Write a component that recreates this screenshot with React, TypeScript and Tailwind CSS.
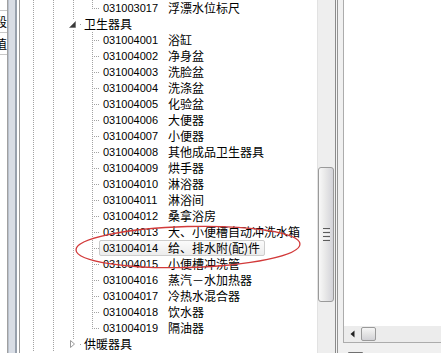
import React from "react";

const CJK = '"Noto Sans CJK SC", "Noto Sans CJK JP", sans-serif';
const LAT = '"Liberation Sans", Arial, sans-serif';

type Row =
  | { kind: "leaf"; code: string; name: string; last?: boolean; selected?: boolean }
  | { kind: "cat"; name: string; open: boolean };

const rows: Row[] = [
  { kind: "leaf", code: "031003017", name: "浮漂水位标尺", last: true },
  { kind: "cat", name: "卫生器具", open: true },
  { kind: "leaf", code: "031004001", name: "浴缸" },
  { kind: "leaf", code: "031004002", name: "净身盆" },
  { kind: "leaf", code: "031004003", name: "洗脸盆" },
  { kind: "leaf", code: "031004004", name: "洗涤盆" },
  { kind: "leaf", code: "031004005", name: "化验盆" },
  { kind: "leaf", code: "031004006", name: "大便器" },
  { kind: "leaf", code: "031004007", name: "小便器" },
  { kind: "leaf", code: "031004008", name: "其他成品卫生器具" },
  { kind: "leaf", code: "031004009", name: "烘手器" },
  { kind: "leaf", code: "031004010", name: "淋浴器" },
  { kind: "leaf", code: "031004011", name: "淋浴间" },
  { kind: "leaf", code: "031004012", name: "桑拿浴房" },
  { kind: "leaf", code: "031004013", name: "大、小便槽自动冲洗水箱" },
  { kind: "leaf", code: "031004014", name: "给、排水附(配)件", selected: true },
  { kind: "leaf", code: "031004015", name: "小便槽冲洗管" },
  { kind: "leaf", code: "031004016", name: "蒸汽－水加热器" },
  { kind: "leaf", code: "031004017", name: "冷热水混合器" },
  { kind: "leaf", code: "031004018", name: "饮水器" },
  { kind: "leaf", code: "031004019", name: "隔油器", last: true },
  { kind: "cat", name: "供暖器具", open: false },
];

const G = "#a3a3a3";

function VLine({ x, y1, y2 }: { x: number; y1: number; y2: number }) {
  return (
    <line
      x1={x + 0.5}
      x2={x + 0.5}
      y1={y1}
      y2={y2}
      stroke={G}
      strokeWidth={1}
      strokeDasharray="1 1"
      shapeRendering="crispEdges"
    />
  );
}

function LeafGuides({ last }: { last?: boolean }) {
  return (
    <svg width={79} height={16} className="shrink-0 block">
      <VLine x={13} y1={0} y2={16} />
      <VLine x={33} y1={0} y2={16} />
      <VLine x={53} y1={0} y2={16} />
      <VLine x={72} y1={0} y2={last ? 9 : 16} />
      {[74, 76, 78].map((x) => (
        <rect key={x} x={x} y={8} width={1} height={1} fill={G} />
      ))}
    </svg>
  );
}

function CatGuides({ open }: { open: boolean }) {
  return (
    <svg width={64} height={16} className="shrink-0 block">
      <VLine x={13} y1={0} y2={16} />
      <VLine x={33} y1={0} y2={16} />
      {open ? (
        <>
          <VLine x={53} y1={0} y2={4} />
          <VLine x={53} y1={14} y2={16} />
          <polygon points="55.5,5.5 55.5,11.5 49.5,11.5" fill="#3a3a3a" stroke="#5a5a5a" strokeWidth={0.5} />
        </>
      ) : (
        <>
          <VLine x={53} y1={0} y2={3} />
          <polygon points="50.5,4.5 50.5,11.5 54.5,8" fill="#ffffff" stroke="#9a9a9a" strokeWidth={1} />
        </>
      )}
      <rect x={60} y={8} width={1} height={1} fill={G} />
    </svg>
  );
}

function TreeRow({ row }: { row: Row }) {
  if (row.kind === "cat") {
    return (
      <div className="flex h-4 items-center">
        <CatGuides open={row.open} />
        <span className="text-[12px] leading-none text-black" style={{ fontFamily: CJK }}>
          {row.name}
        </span>
      </div>
    );
  }
  return (
    <div className="flex h-4 items-stretch">
      <LeafGuides last={row.last} />
      <div
        className={
          row.selected
            ? "flex items-center rounded-[2px] border border-[#cdcdcd] bg-[linear-gradient(to_bottom,#fbfbfb,#ececec)] pl-[3px] pr-[4px]"
            : "flex items-center border border-transparent pl-[3px] pr-[4px]"
        }
      >
        <span className="w-[65px] shrink-0 text-[11px] leading-none text-black" style={{ fontFamily: LAT }}>
          {row.code}
        </span>
        <span className="whitespace-nowrap text-[12px] leading-none text-black" style={{ fontFamily: CJK }}>
          {row.name}
        </span>
      </div>
    </div>
  );
}

export default function App() {
  return (
    <div className="relative flex h-[353px] w-[441px] overflow-hidden bg-white">
      {/* left grid panel (cut off) */}
      <div className="flex w-[8px] shrink-0 flex-col border-r border-[#a0a0a0] bg-white" style={{ fontFamily: CJK }}>
        <div className="h-[11px] border-b border-[#c8c8c8]" />
        <div className="flex h-[22px] items-center justify-end overflow-hidden border-b border-[#c8c8c8] text-[12px] leading-none">
          <span className="shrink-0">段</span>
        </div>
        <div className="flex h-[22px] items-center justify-end overflow-hidden border-b border-[#c8c8c8] text-[12px] leading-none">
          <span className="shrink-0">值</span>
        </div>
        <div className="flex-1" />
      </div>

      {/* splitter */}
      <div className="flex w-[11px] shrink-0">
        <div className="w-[1px] bg-[#b9c1cc]" />
        <div className="w-[6px] bg-[#d8dde5]" />
        <div className="w-[2px] bg-[#98a1ad]" />
        <div className="w-[2px] bg-white" />
      </div>

      {/* tree panel */}
      <div className="flex w-[316px] shrink-0 border-l border-[#9b9b9b]">
        <div className="flex w-[297px] shrink-0 flex-col overflow-hidden">
          {rows.map((r, i) => (
            <TreeRow key={i} row={r} />
          ))}
        </div>
        {/* vertical scrollbar */}
        <div className="flex w-[18px] shrink-0 flex-col border-l border-[#e2e2e2] bg-[#eeeeee]">
          <div className="h-[167px] shrink-0" />
          <div className="flex h-[135px] w-[16px] shrink-0 items-center justify-center rounded-[3px] border border-[#9a9a9a] bg-[linear-gradient(to_right,#f8f8f8,#e8e8e8_45%,#d3d3d9)]">
            <div className="flex flex-col gap-[1px]">
              <div className="h-[1px] w-[7px] bg-[#5c5c5c]" />
              <div className="h-[1px] w-[7px] bg-[#f4f4f4]" />
              <div className="h-[1px] w-[7px] bg-[#5c5c5c]" />
              <div className="h-[1px] w-[7px] bg-[#f4f4f4]" />
              <div className="h-[1px] w-[7px] bg-[#5c5c5c]" />
              <div className="h-[1px] w-[7px] bg-[#f4f4f4]" />
              <div className="h-[1px] w-[7px] bg-[#5c5c5c]" />
            </div>
          </div>
          <div className="flex-1" />
        </div>
      </div>

      {/* separator lines */}
      <div className="flex w-[8px] shrink-0">
        <div className="w-[1px] bg-[#8a8a8a]" />
        <div className="w-[1px] bg-[#f4f4f4]" />
        <div className="w-[1px] bg-[#949494]" />
        <div className="w-[5px] bg-[#f0f0f0]" />
      </div>

      {/* right panel */}
      <div className="flex flex-1 flex-col bg-[#f0f0f0]">
        <div className="flex h-[343px] shrink-0 flex-col border-b border-l border-[#acacac] bg-white">
          <div className="flex-1" />
          <div className="flex h-[16px] shrink-0 items-center bg-[#ececec]">
            <div className="flex w-[17px] shrink-0 items-center justify-center">
              <svg width={5} height={8} className="block">
                <polygon points="4.5,0.5 4.5,7.5 0.5,4" fill="#222" />
              </svg>
            </div>
            <div className="h-[14px] w-[15px] rounded-[2px] border border-[#9a9a9a] bg-[linear-gradient(to_bottom,#f6f6f6,#e4e4e4_50%,#d2d2d6)]" />
          </div>
        </div>
        <div className="ml-[5px] mt-[9px] h-[2px] w-[15px] rounded-t-[2px] border-t border-[#707070]" />
      </div>

      {/* red annotation ellipse */}
      <svg className="pointer-events-none absolute left-0 top-0" width={441} height={353}>
        <ellipse
          cx={188}
          cy={247}
          rx={112}
          ry={20.5}
          transform="rotate(-1.5 188 247)"
          fill="none"
          stroke="#d23a3a"
          strokeWidth={1.3}
        />
      </svg>
    </div>
  );
}
